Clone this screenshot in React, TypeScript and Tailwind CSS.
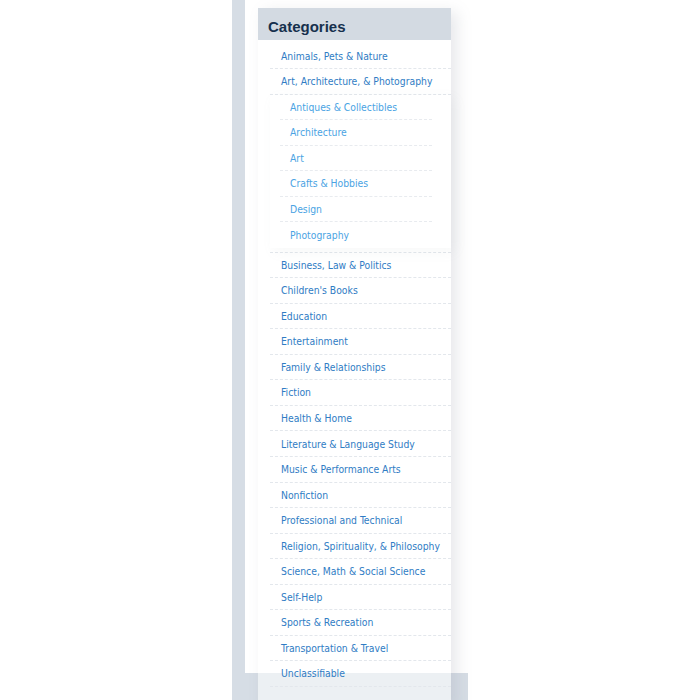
import React from "react";

const top1 = ["Animals, Pets & Nature", "Art, Architecture, & Photography"];
const subs = ["Antiques & Collectibles", "Architecture", "Art", "Crafts & Hobbies", "Design", "Photography"];
const rest = [
  "Business, Law & Politics",
  "Children's Books",
  "Education",
  "Entertainment",
  "Family & Relationships",
  "Fiction",
  "Health & Home",
  "Literature & Language Study",
  "Music & Performance Arts",
  "Nonfiction",
  "Professional and Technical",
  "Religion, Spirituality, & Philosophy",
  "Science, Math & Social Science",
  "Self-Help",
  "Sports & Recreation",
  "Transportation & Travel",
  "Unclassifiable",
];

const itemFont = { fontFamily: '"DejaVu Sans Condensed", "DejaVu Sans", sans-serif' };

function TopItem({ label }: { label: string }) {
  return (
    <li className="ml-[12px] h-[25.55px] flex items-center border-b border-dashed border-[#e3e7ec] pl-[11px]">
      <a className="text-[10.3px] text-[#2f7cc4] leading-none" style={itemFont}>{label}</a>
    </li>
  );
}

export default function App() {
  return (
    <div className="w-[700px] h-[700px] bg-white overflow-hidden relative">
      <div className="ml-[232px] w-[236px] h-[700px] bg-[#d6dde5] flex flex-col">
        <div className="ml-[13px] w-[223px] h-[673px] bg-white" />
      </div>
      <div className="absolute left-[258px] top-[8px] w-[193px] shadow-[6px_4px_14px_rgba(120,130,145,0.18)] bg-[rgba(255,255,255,0.55)]">
        <div className="h-[32px] bg-[#d3dae2] flex items-center pl-[10px] pt-[6px]">
          <span className="text-[15px] font-bold text-[#16304d]" style={{ fontFamily: '"Liberation Sans", Arial, sans-serif' }}>Categories</span>
        </div>
        <ul className="pt-[3.5px] pb-[20px]">
          {top1.map((t) => (
            <TopItem key={t} label={t} />
          ))}
          <li className="ml-[12px] border-b border-dashed border-[#e3e7ec] pb-[4px]">
            <ul className="shadow-[4px_4px_12px_rgba(140,150,160,0.07)]">
              {subs.map((s, i) => (
                <li key={s} className={i === subs.length - 1 ? "ml-[10px] mr-[19px] h-[25.5px] flex items-center pl-[10px]" : "ml-[10px] mr-[19px] h-[25.5px] flex items-center border-b border-dashed border-[#e8ebef] pl-[10px]"}>
                  <a className="text-[10.3px] text-[#4aa3e3] leading-none" style={itemFont}>{s}</a>
                </li>
              ))}
            </ul>
          </li>
          {rest.map((t) => (
            <TopItem key={t} label={t} />
          ))}
        </ul>
      </div>
    </div>
  );
}
